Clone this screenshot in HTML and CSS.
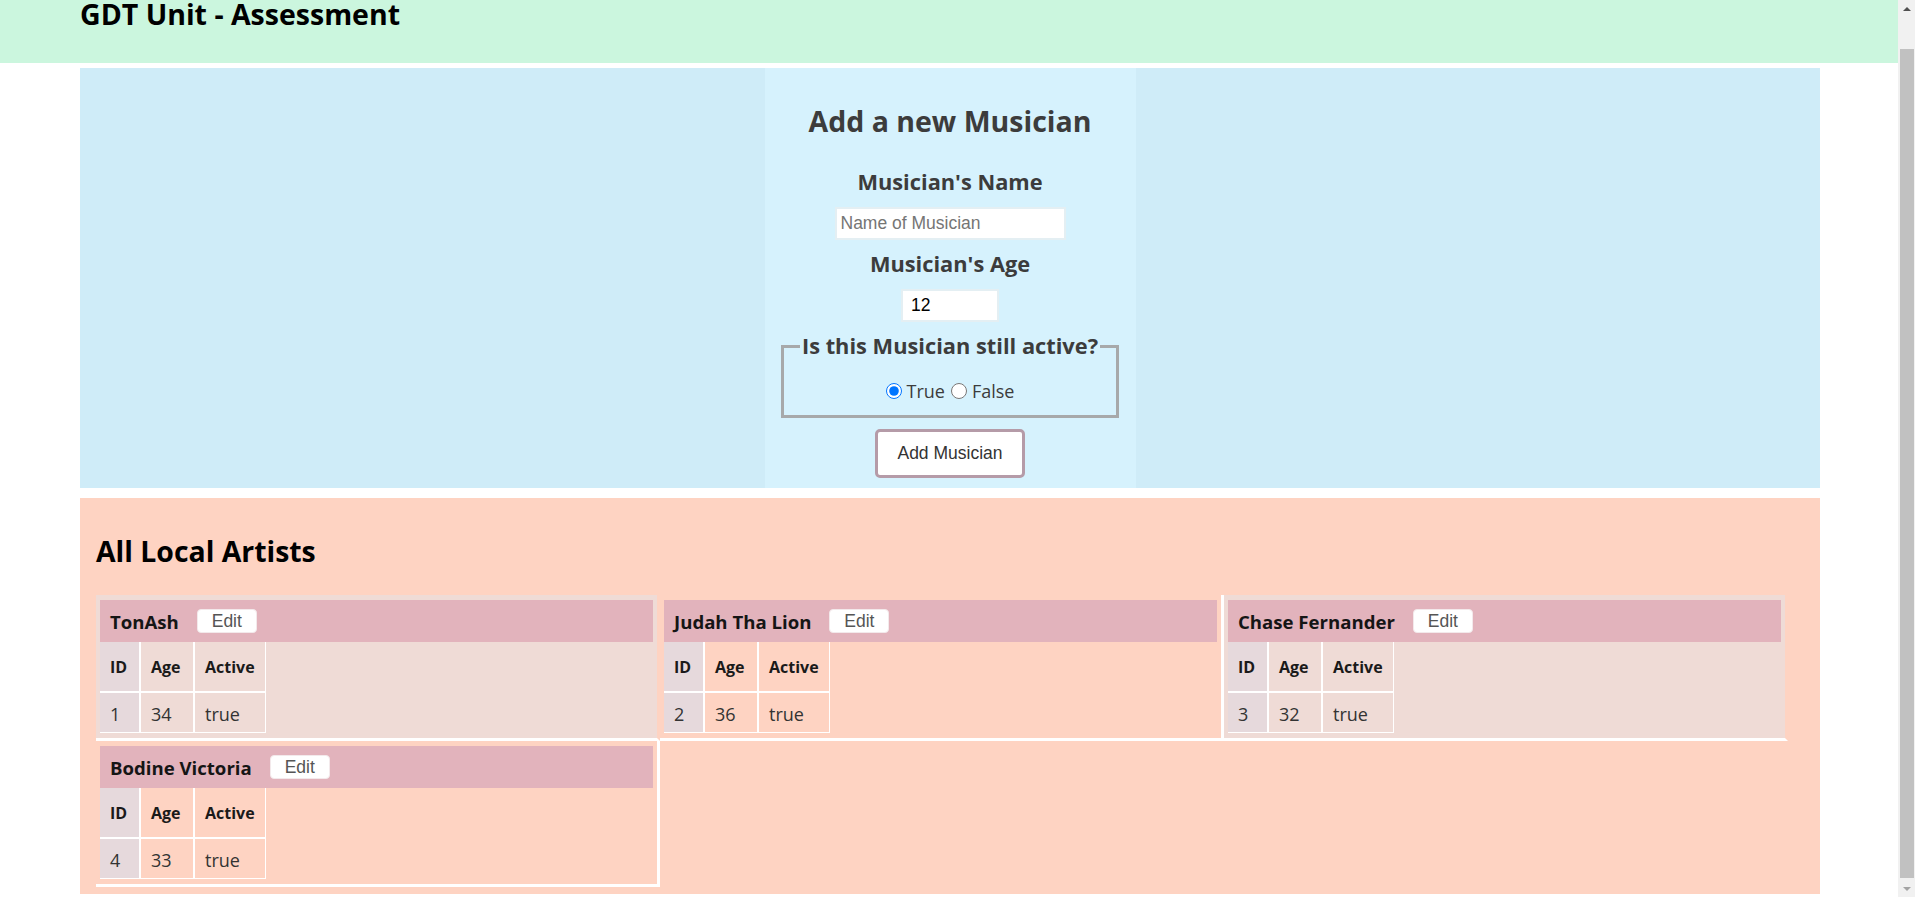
FILE: index.html
```html
<!DOCTYPE html>
<html lang="en">
<head>
<meta charset="utf-8">
<title>GDT Unit - Assessment</title>
<link rel="stylesheet" href="styles.css">
</head>
<body>
<header class="topbar">
  <div class="wrap">
    <h1 class="site-title">GDT Unit - Assessment</h1>
  </div>
</header>
<main class="wrap page">
  <section class="form-section">
    <form class="form-panel">
      <h2 class="form-title">Add a new Musician</h2>
      <label class="field-label" for="name">Musician's Name</label>
      <input id="name" class="text-input name-input" type="text" placeholder="Name of Musician">
      <label class="field-label" for="age">Musician's Age</label>
      <input id="age" class="text-input age-input" type="text" value="12">
      <fieldset class="active-set">
        <legend class="active-legend">Is this Musician still active?</legend>
        <div class="radio-row">
          <input class="radio" type="radio" id="r-true" name="active" checked>
          <label class="radio-label" for="r-true">True</label>
          <input class="radio" type="radio" id="r-false" name="active">
          <label class="radio-label" for="r-false">False</label>
        </div>
      </fieldset>
      <button class="add-btn" type="button">Add Musician</button>
    </form>
  </section>

  <section class="artists">
    <h2 class="artists-title">All Local Artists</h2>
    <div class="card-grid">
      <div class="card card-odd">
        <div class="card-head"><span class="card-name">TonAsh</span><button class="edit-btn" type="button">Edit</button></div>
        <table class="card-table">
          <tr><th class="col-id">ID</th><th class="col-age">Age</th><th class="col-active">Active</th></tr>
          <tr><td class="col-id">1</td><td>34</td><td>true</td></tr>
        </table>
      </div>
      <div class="card card-even">
        <div class="card-head"><span class="card-name">Judah Tha Lion</span><button class="edit-btn" type="button">Edit</button></div>
        <table class="card-table">
          <tr><th class="col-id">ID</th><th class="col-age">Age</th><th class="col-active">Active</th></tr>
          <tr><td class="col-id">2</td><td>36</td><td>true</td></tr>
        </table>
      </div>
      <div class="card card-odd">
        <div class="card-head"><span class="card-name">Chase Fernander</span><button class="edit-btn" type="button">Edit</button></div>
        <table class="card-table">
          <tr><th class="col-id">ID</th><th class="col-age">Age</th><th class="col-active">Active</th></tr>
          <tr><td class="col-id">3</td><td>32</td><td>true</td></tr>
        </table>
      </div>
      <div class="card card-even">
        <div class="card-head"><span class="card-name">Bodine Victoria</span><button class="edit-btn" type="button">Edit</button></div>
        <table class="card-table">
          <tr><th class="col-id">ID</th><th class="col-age">Age</th><th class="col-active">Active</th></tr>
          <tr><td class="col-id">4</td><td>33</td><td>true</td></tr>
        </table>
      </div>
    </div>
  </section>
</main>

<div class="scrollbar" aria-hidden="true">
  <div class="sb-btn sb-up"></div>
  <div class="sb-track"><div class="sb-thumb"></div></div>
  <div class="sb-btn sb-down"></div>
</div>
</body>
</html>
```

FILE: styles.css
```css
body {
  margin: 0;
  padding-right: 17px;
  background: #ffffff;
  font-family: "Open Sans", "Noto Sans", sans-serif;
  color: #111;
}

.wrap {
  width: 1740px;
  margin: 0 0 0 80px;
}

/* header */
.topbar {
  background: #cbf6de;
  height: 63px;
}

.site-title {
  margin: 0;
  font-size: 28.5px;
  line-height: 28px;
  font-weight: 700;
  color: #000;
}

.page {
  padding-top: 5px;
}

/* form section */
.form-section {
  background: #cfecf8;
}

.form-panel {
  width: 371px;
  margin: 0 auto;
  background: #d6f2fd;
  display: flex;
  flex-direction: column;
  align-items: center;
  padding: 36px 0 10px;
  color: #3c3c3c;
}

.form-title {
  margin: 0;
  font-size: 28.5px;
  line-height: 34px;
  font-weight: 700;
}

.field-label {
  margin-top: 31px;
  font-size: 21.8px;
  line-height: 26px;
  font-weight: 700;
}

.name-input + .field-label {
  margin-top: 11px;
}

.text-input {
  box-sizing: border-box;
  height: 33px;
  margin-top: 12px;
  border: 2px solid #e4eff3;
  background: #fff;
  padding: 0 4px;
  font-family: "Liberation Sans", Arial, sans-serif;
  font-size: 17.5px;
  color: #000;
  outline: none;
}

.text-input::placeholder {
  color: #757575;
}

.name-input {
  width: 231px;
}

.age-input {
  width: 98px;
  padding-left: 8px;
}

.active-set {
  margin: 11px 0 0;
  padding: 20px 16px 12px;
  border: 3px solid #a7a9aa;
  min-width: 0;
}

.active-legend {
  padding: 0 2px;
  font-size: 21.8px;
  line-height: 26px;
  font-weight: 700;
  color: #3c3c3c;
}

.radio-row {
  display: flex;
  justify-content: center;
  align-items: center;
  height: 24px;
  font-size: 18px;
  line-height: 24px;
  color: #3c3c3c;
}

.radio {
  width: 16px;
  height: 16px;
  margin: 0 5px 0 0;
}

.radio-label {
  margin-right: 6px;
}

.radio-label:last-child {
  margin-right: 0;
}

.add-btn {
  margin-top: 11px;
  width: 150px;
  height: 49px;
  background: #fff;
  border: 3px solid #b59ba8;
  border-radius: 5px;
  font-family: "Liberation Sans", Arial, sans-serif;
  font-size: 17.5px;
  color: #333;
  padding: 0;
}

/* artists */
.artists {
  margin-top: 10px;
  background: #fed3c2;
  padding: 35px 16px 7px;
}

.artists-title {
  margin: 0 0 26px;
  font-size: 28.4px;
  line-height: 36px;
  font-weight: 700;
  color: #000;
}

.card-grid {
  display: flex;
  flex-wrap: wrap;
  width: 1692px;
}

.card {
  box-sizing: border-box;
  width: 564px;
  flex: none;
  padding: 5px 4px 5px;
  border-right: 3px solid transparent;
  border-bottom: 3px solid #fff;
  background-clip: padding-box;
}

.card-odd {
  background-color: #efdbd6;
}

.card-even {
  border-right-color: #fff;
}

.card-head {
  height: 42px;
  background: #e2b3bc;
  display: flex;
  align-items: center;
  gap: 18px;
  padding-left: 10px;
}

.card-name {
  font-size: 18.6px;
  font-weight: 700;
  color: #151515;
}

.edit-btn {
  width: 60px;
  height: 24px;
  padding: 0;
  background: #fff;
  border: 1px solid #f3e9eb;
  border-radius: 4px;
  font-family: "Liberation Sans", Arial, sans-serif;
  font-size: 17.5px;
  color: #555;
}

.card-table {
  border-collapse: separate;
  border-spacing: 0;
  color: #1a1a1a;
}

.card-table th,
.card-table td {
  text-align: left;
  border: 1px solid #fff;
}

.card-table th {
  border-top: 0;
  padding: 15px 10px 14px;
  font-size: 16px;
  line-height: 20px;
  font-weight: 700;
}

.card-table td {
  padding: 10px 10px 7px;
  font-size: 18px;
  line-height: 22px;
  color: #333;
}

.card-table .col-id {
  width: 19px;
  border-left: 0;
  background: #e6d9dc;
}

.card-table .col-age {
  width: 32px;
}

.card-table .col-active {
  width: 49px;
}

/* browser scrollbar as seen in the capture */
.scrollbar {
  position: fixed;
  top: 0;
  right: 0;
  width: 17px;
  height: 100%;
  background: #f1f1f1;
  display: flex;
  flex-direction: column;
}

.sb-btn {
  height: 17px;
  flex: none;
  display: flex;
  align-items: center;
  justify-content: center;
}

.sb-up::before,
.sb-down::before {
  content: "";
  border-left: 4px solid transparent;
  border-right: 4px solid transparent;
}

.sb-up::before {
  border-bottom: 4px solid #505050;
}

.sb-down::before {
  border-top: 4px solid #a3a3a3;
}

.sb-track {
  flex: 1;
  padding: 32px 1px 2px 2px;
}

.sb-thumb {
  height: 829px;
  background: #c1c1c1;
}
```
